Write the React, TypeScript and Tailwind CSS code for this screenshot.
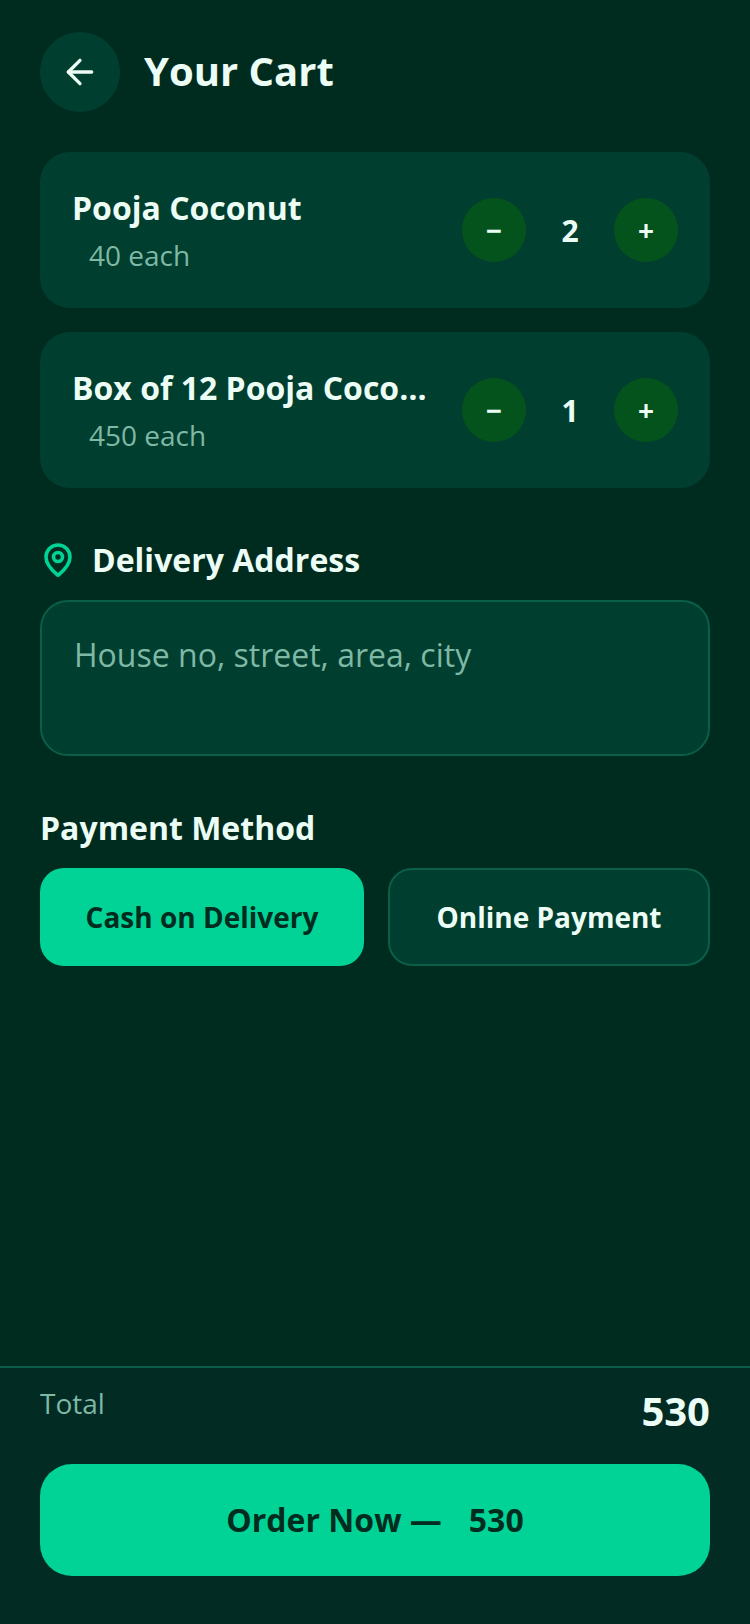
import { ArrowLeft, MapPin } from "lucide-react";

const items = [
  { name: "Pooja Coconut", price: "40 each", qty: 2 },
  { name: "Box of 12 Pooja Coconuts", price: "450 each", qty: 1 },
];

function Round({ label }: { label: string }) {
  return (
    <div className="w-16 h-16 shrink-0 rounded-full bg-[#04531d] flex items-center justify-center text-[28px] font-bold text-[#ecfdf5]">
      {label}
    </div>
  );
}

export default function App() {
  return (
    <div className="w-[750px] h-[1624px] bg-[#002c20] flex flex-col font-['Open_Sans',sans-serif] text-[#ecfdf5] overflow-hidden">
      <div className="flex-1 px-10 pt-8">
        <div className="flex items-center gap-6 mb-10">
          <div className="w-20 h-20 rounded-full bg-[#003f2f] flex items-center justify-center">
            <ArrowLeft size={40} strokeWidth={2} className="text-[#ecfdf5]" />
          </div>
          <h1 className="text-[40px] leading-[54px] mb-[2px] font-bold">Your Cart</h1>
        </div>

        <div className="flex flex-col gap-6">
          {items.map((it) => (
            <div key={it.name} className="h-[156px] rounded-[30px] bg-[#003e2f] pl-8 pr-8 flex items-center">
              <div className="flex-1 min-w-0">
                <div className="text-[32px] leading-[44px] font-bold truncate pr-8">{it.name}</div>
                <div className="text-[28px] leading-[38px] text-[#7fb8a4] pl-[17px] mt-[6px]">{it.price}</div>
              </div>
              <div className="flex items-center">
                <Round label="−" />
                <div className="w-[88px] text-center text-[30px] font-bold">{it.qty}</div>
                <Round label="+" />
              </div>
            </div>
          ))}
        </div>

        <div className="flex items-center gap-4 mt-12 h-12">
          <MapPin size={36} strokeWidth={2.4} className="text-[#00d395]" />
          <span className="text-[32px] font-bold">Delivery Address</span>
        </div>
        <div className="mt-4 h-[156px] rounded-[28px] bg-[#003e2f] border-2 border-[#0b5e48] px-8 pt-[31px] text-[32px] leading-[44px] text-[#7fb8a4]">
          House no, street, area, city
        </div>

        <div className="mt-[50px] text-[32px] leading-[44px] font-bold">Payment Method</div>
        <div className="mt-[18px] flex gap-6">
          <div className="w-[324px] h-[98px] rounded-[24px] bg-[#00d395] text-[#002c20] flex items-center justify-center text-[28px] font-bold">
            Cash on Delivery
          </div>
          <div className="flex-1 h-[98px] rounded-[24px] bg-[#003e2f] border-2 border-[#0b5e48] flex items-center justify-center text-[28px] font-bold">
            Online Payment
          </div>
        </div>
      </div>

      <div className="border-t-2 border-[#0b5e48] bg-[#012b23] px-10 pt-4 pb-12">
        <div className="flex justify-between items-start">
          <span className="text-[28px] leading-[38px] text-[#7fb8a4]">Total</span>
          <span className="text-[40px] leading-[54px] font-bold">530</span>
        </div>
        <div className="mt-[26px] h-[112px] rounded-[32px] bg-[#00d395] text-[#002c20] flex items-center justify-center gap-[2px] text-[32px] font-bold whitespace-pre">
          <span>Order Now —  </span>
          <span> 530</span>
        </div>
      </div>
    </div>
  );
}
